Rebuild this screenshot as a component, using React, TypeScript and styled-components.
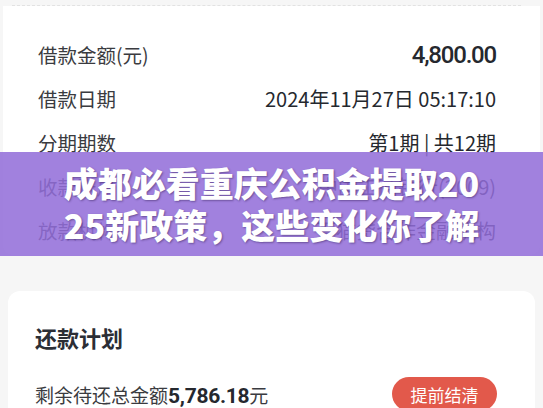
import React from "react";
import styled, { createGlobalStyle } from "styled-components";

const GlobalStyle = createGlobalStyle`
  html, body {
    margin: 0;
    padding: 0;
    background: #f6f6f6;
    font-family: "Noto Sans CJK SC", "Noto Sans", sans-serif;
  }
`;

const Page = styled.div`
  position: relative;
  width: 543px;
  height: 408px;
  overflow: hidden;
  background: #f6f6f6;
  padding-top: 5px;
  box-sizing: border-box;
`;

const DashedLine = styled.div`
  height: 0;
  margin: 0 22px 0 12px;
  border-top: 1px dashed #e2e2e2;
`;

const InfoCard = styled.div`
  background: #ffffff;
  margin: 0 3px;
  padding: 27px 0 2px;
  border-radius: 0 0 10px 10px;
`;

const Row = styled.div`
  display: flex;
  align-items: center;
  justify-content: space-between;
  height: 44px;
  padding: 0 44px 0 35px;
`;

const Label = styled.span`
  font-size: 19.5px;
  color: #3a3b40;
  line-height: 1;
`;

const Value = styled.span<{ $big?: boolean }>`
  font-family: ${({ $big }) =>
    $big ? `"Roboto", "Noto Sans CJK SC", sans-serif` : `"Noto Sans CJK SC", sans-serif`};
  font-size: ${({ $big }) => ($big ? "24px" : "20px")};
  font-weight: ${({ $big }) => ($big ? 500 : 400)};
  letter-spacing: ${({ $big }) => ($big ? "-1.2px" : "0")};
  color: #25282e;
  line-height: 1;
`;

const Spacer = styled.div`
  height: 36px;
`;

const PlanCard = styled.div`
  background: #ffffff;
  margin: 0 8px;
  padding: 31px 38px 20px 27px;
  border-radius: 12px;
`;

const PlanTitle = styled.div`
  font-size: 22px;
  font-weight: 700;
  color: #2b2e35;
  line-height: 30px;
`;

const PlanRow = styled.div`
  display: flex;
  align-items: center;
  justify-content: space-between;
  margin-top: 25px;
`;

const Remaining = styled.span`
  font-size: 19px;
  color: #3a3b40;
  b {
    font-family: "Roboto", "Noto Sans CJK SC", sans-serif;
    font-weight: 700;
    font-size: 21px;
    color: #25282e;
    letter-spacing: -0.3px;
  }
`;

const SettleButton = styled.button`
  width: 105px;
  height: 34px;
  border: none;
  border-radius: 17px;
  background: #e2594b;
  color: #ffffff;
  font-family: "Noto Sans CJK SC", sans-serif;
  font-size: 17px;
  padding: 0;
`;

const Banner = styled.div`
  position: absolute;
  left: 0;
  right: 0;
  top: 152px;
  height: 104px;
  background: rgba(146, 108, 216, 0.86);
  display: flex;
  align-items: center;
  justify-content: center;
`;

const BannerText = styled.div`
  width: 420px;
  text-align: center;
  color: #ffffff;
  font-size: 34px;
  font-weight: 900;
  line-height: 42px;
  word-break: break-all;
  text-shadow: 1px 1px 2px rgba(40, 20, 70, 0.45);
`;

const rows = [
  { label: "借款金额(元)", value: "4,800.00", big: true },
  { label: "借款日期", value: "2024年11月27日 05:17:10" },
  { label: "分期期数", value: "第1期 | 共12期" },
  { label: "收款账户", value: "中国工商银行(2009)" },
  { label: "放款机构", value: "百猫贷合作金融机构" },
];

export default function App() {
  return (
    <>
      <GlobalStyle />
      <Page>
        <DashedLine />
        <InfoCard>
          {rows.map((r) => (
            <Row key={r.label}>
              <Label>{r.label}</Label>
              <Value $big={r.big}>{r.value}</Value>
            </Row>
          ))}
        </InfoCard>
        <Spacer />
        <PlanCard>
          <PlanTitle>还款计划</PlanTitle>
          <PlanRow>
            <Remaining>
              剩余待还总金额<b>5,786.18</b>元
            </Remaining>
            <SettleButton>提前结清</SettleButton>
          </PlanRow>
        </PlanCard>
        <Banner>
          <BannerText>成都必看重庆公积金提取2025新政策，这些变化你了解</BannerText>
        </Banner>
      </Page>
    </>
  );
}
